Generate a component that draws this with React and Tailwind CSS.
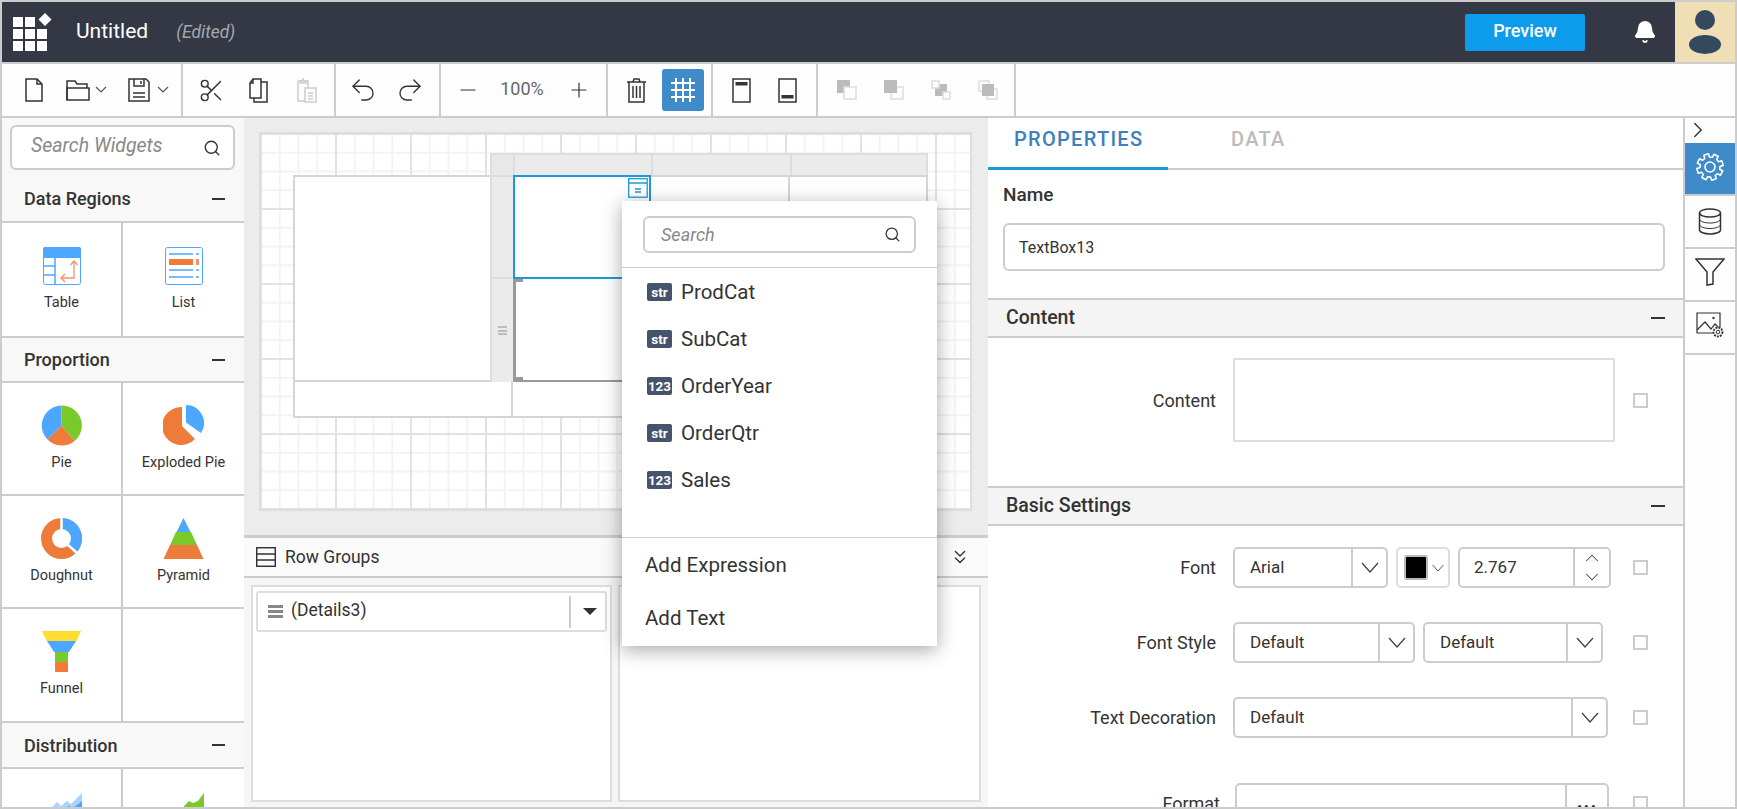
import React from 'react'
import { Search, Scissors, Undo2, Redo2, Minus, Plus, Bell, ChevronRight, ChevronUp, ChevronsDown } from 'lucide-react'

const S = { fill: 'none', stroke: '#333', strokeWidth: 1.5 }

function Logo() {
  const cells = [[0, 4], [12, 4], [0, 16], [12, 16], [24, 16], [0, 28], [12, 28], [24, 28]]
  return (
    <svg width="40" height="38" viewBox="0 0 40 38" className="ml-[11px]">
      {cells.map(([x, y]) => <rect key={`${x}-${y}`} x={x} y={y} width="10" height="10" fill="#fff" />)}
      <polygon points="32,0 38.500,6.500 32,13 25.500,6.500" fill="#fff" />
    </svg>
  )
}

function FileIcon() {
  return <svg width="18" height="24" viewBox="0 0 18 24" {...S}><path d="M1 1h11l5 5v17H1z" /><path d="M12 1v5h5" /></svg>
}
function FolderIcon() {
  return <svg width="24" height="22" viewBox="0 0 24 22" {...S}><path d="M1 21V2h8l2 3h10v4" /><path d="M1 9h22v12H1z" /></svg>
}
function SaveIcon() {
  return <svg width="22" height="24" viewBox="0 0 22 24" {...S}><path d="M1 1h17l3 3v19H1z" /><path d="M6 1v7h10V1M13 3v3M5 15h12M5 19h12" /></svg>
}
function Chev() {
  return <svg width="12" height="8" viewBox="0 0 12 8" fill="none" stroke="#555" strokeWidth="1.200"><path d="M1 1l5 5 5-5" /></svg>
}
function CopyIcon() {
  return <svg width="19" height="25" viewBox="0 0 19 25" {...S}><path d="M1 5l3-4h8v19H1z" /><path d="M1 5h3V1M12 4h6v20H5v-4" /></svg>
}
function PasteIcon() {
  return <svg width="24" height="25" viewBox="0 0 24 25" fill="none" stroke="#ccc" strokeWidth="1.500"><path d="M5 3h10v7M5 3v20h7" /><path d="M7 5V3h2l1-2 1 2h2v2z" /><path d="M12 10h11v14H12zM15 15h5M15 18h5M15 21h5" /></svg>
}
function TrashIcon() {
  return <svg width="19" height="25" viewBox="0 0 19 25" {...S}><path d="M0 4h19M6 4l1-3h5l1 3" /><path d="M2 4v20h15V4" /><path d="M6 8v12M9.500 8v12M13 8v12" /></svg>
}
function GridIcon() {
  return <svg width="24" height="24" viewBox="0 0 24 24" stroke="#fff" strokeWidth="2"><path d="M0 5h24M0 12h24M0 19h24M5 0v24M12 0v24M19 0v24" /></svg>
}
function HeaderIcon({ bottom }) {
  return (
    <svg width="19" height="25" viewBox="0 0 19 25" {...S}>
      <rect x="1" y="1" width="17" height="23" />
      <rect x="3.500" y={bottom ? 17 : 4} width="12" height="3.500" fill="#333" stroke="none" />
    </svg>
  )
}
function LayerIcon({ kind }) {
  const f = '#bbb'
  const e = '#ddd'
  if (kind === 0) return <svg width="20" height="20" viewBox="0 0 20 20"><rect x="0" y="0" width="13" height="13" fill={f} /><rect x="7" y="7" width="12" height="12" fill="#fdfdfd" stroke={e} strokeWidth="1.500" /></svg>
  if (kind === 1) return <svg width="20" height="20" viewBox="0 0 20 20"><rect x="7" y="7" width="12" height="12" fill="#fdfdfd" stroke={e} strokeWidth="1.500" /><rect x="0" y="0" width="13" height="13" fill={f} /></svg>
  if (kind === 2) return <svg width="20" height="20" viewBox="0 0 20 20"><rect x="4" y="4" width="12" height="12" fill={f} /><rect x="1" y="1" width="7" height="7" fill="#fdfdfd" stroke={e} strokeWidth="1.500" /><rect x="12" y="12" width="7" height="7" fill="#fdfdfd" stroke={e} strokeWidth="1.500" /></svg>
  return <svg width="20" height="20" viewBox="0 0 20 20"><rect x="1" y="1" width="10" height="10" fill="none" stroke={e} strokeWidth="1.500" /><rect x="9" y="9" width="10" height="10" fill="none" stroke={e} strokeWidth="1.500" /><rect x="4" y="4" width="12" height="12" fill={f} /></svg>
}

function Toolbar() {
  const sep = 'h-full border-r-2 border-[#ccc] flex items-center'
  return (
    <div className="h-[56px] shrink-0 flex border-y-2 border-[#ccc] bg-[#fdfdfd]">
      <div className={`${sep} w-[181px]`}>
        <span className="ml-[23px]"><FileIcon /></span>
        <span className="ml-[23px]"><FolderIcon /></span>
        <span className="ml-[5px]"><Chev /></span>
        <span className="ml-[21px]"><SaveIcon /></span>
        <span className="ml-[7px]"><Chev /></span>
      </div>
      <div className={`${sep} w-[153px]`}>
        <Scissors size={27} strokeWidth={1.300} color="#333" className="ml-[15px]" />
        <span className="ml-[24px]"><CopyIcon /></span>
        <span className="ml-[25px]"><PasteIcon /></span>
      </div>
      <div className={`${sep} w-[105px]`}>
        <Undo2 size={30} strokeWidth={1.100} color="#333" className="ml-[12px]" />
        <Redo2 size={30} strokeWidth={1.100} color="#333" className="ml-[17px]" />
      </div>
      <div className={`${sep} w-[167px] text-[18px] text-[#666]`}>
        <Minus size={24} strokeWidth={1.200} color="#333" className="ml-[15px]" />
        <span className="ml-[17px] -mt-[4px] w-[50px] text-center">100%</span>
        <Plus size={24} strokeWidth={1.200} color="#333" className="ml-[20px]" />
      </div>
      <div className={`${sep} w-[105px]`}>
        <span className="ml-[19px]"><TrashIcon /></span>
        <span className="ml-[16px] w-[42px] h-[42px] rounded-[3px] bg-[#3f8ac9] flex items-center justify-center"><GridIcon /></span>
      </div>
      <div className={`${sep} w-[105px]`}>
        <span className="ml-[19px]"><HeaderIcon /></span>
        <span className="ml-[27px]"><HeaderIcon bottom /></span>
      </div>
      <div className={`${sep} w-[198px]`}>
        <span className="ml-[19px]"><LayerIcon kind={0} /></span>
        <span className="ml-[27px]"><LayerIcon kind={1} /></span>
        <span className="ml-[27px]"><LayerIcon kind={2} /></span>
        <span className="ml-[27px]"><LayerIcon kind={3} /></span>
      </div>
    </div>
  )
}

const BLUE = '#4da6ff'
const ORANGE = '#ee7b39'
const GREEN = '#7ac92a'

function TableWidget() {
  return (
    <svg width="38" height="38" viewBox="0 0 38 38" fill="none">
      <rect x="0.500" y="0.500" width="37" height="37" rx="2" fill="#fff" stroke={BLUE} />
      <rect x="0" y="0" width="38" height="11" rx="2" fill={BLUE} />
      <path d="M12 11v27M1 19h11M1 28h11" stroke={BLUE} strokeWidth="1.500" />
      <path d="M31 14v17H18M27.500 18l3.500-4 3.500 4M22 27l-4 4 4 4" stroke="#f4936a" strokeWidth="1.300" />
    </svg>
  )
}
function ListWidget() {
  return (
    <svg width="38" height="38" viewBox="0 0 38 38" fill="none">
      <rect x="0.500" y="0.500" width="37" height="37" rx="2" fill="#fff" stroke={BLUE} />
      <path d="M4 7h24M4 23h24M4 30h24M31 7h3M31 23h3M31 30h3" stroke={BLUE} strokeWidth="1.500" />
      <rect x="4" y="12" width="24" height="6" fill={ORANGE} />
      <rect x="31" y="12" width="3" height="6" fill="#f4936a" />
    </svg>
  )
}
function PieWidget() {
  return (
    <svg width="41" height="41" viewBox="0 0 41 41">
      <path d="M20.500 20.500V0.500A20 20 0 0 1 33.500 36z" fill={GREEN} />
      <path d="M20.500 20.500L33.500 36A20 20 0 0 1 6.500 34.500z" fill={ORANGE} />
      <path d="M20.500 20.500L6.500 34.500A20 20 0 0 1 20.500 0.500z" fill={BLUE} />
    </svg>
  )
}
function ExplodedWidget() {
  return (
    <svg width="41" height="41" viewBox="0 0 41 41">
      <path d="M19 21L32 34A19 19 0 1 1 19 2z" fill={ORANGE} />
      <path d="M23 17.500V0A18 18 0 0 1 38 28z" fill={BLUE} />
    </svg>
  )
}
function DoughnutWidget() {
  return (
    <svg width="41" height="41" viewBox="0 0 41 41">
      <circle cx="20.500" cy="20.500" r="20.500" fill={ORANGE} />
      <path d="M20.500 20.500V0A20.500 20.500 0 0 1 35.500 34.500z" fill={BLUE} />
      <circle cx="20.500" cy="20.500" r="9.500" fill="#fff" />
      <path d="M20.500 0v13M27 27l9 8" stroke="#fff" strokeWidth="2.500" />
    </svg>
  )
}
function PyramidWidget() {
  return (
    <svg width="41" height="41" viewBox="0 0 41 41">
      <polygon points="20.500,0 27.500,14 13.500,14" fill={BLUE} />
      <polygon points="13,14 28,14 34,27 7,27" fill={GREEN} />
      <polygon points="7,27 34,27 40.500,41 0.500,41" fill={ORANGE} />
    </svg>
  )
}
function FunnelWidget() {
  return (
    <svg width="41" height="41" viewBox="0 0 41 41">
      <polygon points="1,0 40,0 35.500,10 5.500,10" fill="#ffdd33" />
      <polygon points="6,10 35,10 28,21 13,21" fill={BLUE} />
      <rect x="14" y="21" width="13" height="10" fill={GREEN} />
      <rect x="14" y="31" width="13" height="10" rx="1" fill={ORANGE} />
    </svg>
  )
}
function AreaWidget() {
  return (
    <svg width="41" height="41" viewBox="0 0 41 41">
      <path d="M10 17L16 11l4 4 6-5 4 3 11-11v39H10z" fill="#a9d3ff" />
      <path d="M20 19l8-4 4 2 9-7v31H20z" fill={BLUE} />
    </svg>
  )
}
function GreenWidget() {
  return (
    <svg width="41" height="41" viewBox="0 0 41 41">
      <path d="M21 15L26 10l4 2 5-2 6-8v39H21z" fill={GREEN} />
    </svg>
  )
}

function Cell({ icon, label, right }) {
  return (
    <div className={`flex flex-col items-center pt-[22px] ${right ? '' : 'border-r-2 border-[#ccc]'}`}>
      <div className="h-[41px] w-[41px] flex items-center justify-center">{icon}</div>
      {label && <div className="mt-[7px] text-[14.500px] leading-[20px] text-[#333]">{label}</div>}
    </div>
  )
}

function WidgetHeader({ title, className }) {
  return (
    <div className={`flex items-center justify-between pl-[22px] pr-[19px] border-b-2 border-[#ccc] ${className}`}>
      <span className="text-[18px] font-medium text-[#333]">{title}</span>
      <span className="w-[13px] h-[2px] bg-[#333]" />
    </div>
  )
}

function WidgetPanel() {
  const row = 'grid grid-cols-[121px_1fr] bg-white border-b-2 border-[#ccc]'
  return (
    <div className="w-[242px] h-full shrink-0 bg-[#f8f8f8] overflow-hidden">
      <div className="ml-[8px] mt-[7px] w-[225px] h-[45px] rounded-[6px] border-2 border-[#ccc] bg-white flex items-center justify-between pl-[19px] pr-[12px]">
        <span className="italic text-[19.500px] -mt-[4px] text-[#888]">Search Widgets</span>
        <Search size={18} strokeWidth={1.800} color="#333" />
      </div>
      <WidgetHeader title="Data Regions" className="h-[53px] pt-[6px]" />
      <div className={`${row} h-[115px]`}>
        <Cell icon={<TableWidget />} label="Table" />
        <Cell right icon={<ListWidget />} label="List" />
      </div>
      <WidgetHeader title="Proportion" className="h-[45px]" />
      <div className={`${row} h-[113px]`}>
        <Cell icon={<PieWidget />} label="Pie" />
        <Cell right icon={<ExplodedWidget />} label="Exploded Pie" />
      </div>
      <div className={`${row} h-[113px]`}>
        <Cell icon={<DoughnutWidget />} label="Doughnut" />
        <Cell right icon={<PyramidWidget />} label="Pyramid" />
      </div>
      <div className={`${row} h-[114px]`}>
        <Cell icon={<FunnelWidget />} label="Funnel" />
        <Cell right />
      </div>
      <WidgetHeader title="Distribution" className="h-[46px]" />
      <div className="grid grid-cols-[121px_1fr] bg-white h-[60px]">
        <Cell icon={<AreaWidget />} />
        <Cell right icon={<GreenWidget />} />
      </div>
    </div>
  )
}

function ReportTable() {
  const hdr = 'bg-[#ebebeb] border-l-2 border-[#ddd]'
  const cell = 'bg-white border-r-2 border-b-2 border-[#d5d5d5]'
  return (
    <div className="ml-[32px] mt-[19px] grid grid-cols-[197px_23px_138px_139px_138px] grid-rows-[22px_104px_103px_36px]">
      <div />
      <div className="bg-[#e8e8e8] border-t-2 border-l-2 border-[#ddd]" />
      <div className={`${hdr} border-t-2`} />
      <div className={`${hdr} border-t-2`} />
      <div className={`${hdr} border-t-2 border-r-2`} />

      <div className="row-span-2 bg-white border-y-2 border-l-2 border-[#d5d5d5]" />
      <div className="bg-[#ebebeb] border-y-2 border-l-2 border-[#ddd]" />
      <div className="relative bg-white border-2 border-[#1a9ad8]">
        <svg width="20" height="20" viewBox="0 0 20 20" fill="none" stroke="#1a9ad8" strokeWidth="1.300" className="absolute right-[1px] top-[1px]">
          <rect x="0.700" y="0.700" width="18.500" height="18.500" />
          <path d="M1 5h18M7 11h6M7 14h6" />
        </svg>
      </div>
      <div className={`${cell} border-t-2`} />
      <div className={`${cell} border-t-2`} />

      <div className="bg-[#ebebeb] border-l-2 border-[#ddd] flex items-center justify-center">
        <span className="flex flex-col gap-[1.500px]">
          <i className="block w-[9px] h-[2px] bg-[#bbb]" />
          <i className="block w-[9px] h-[2px] bg-[#bbb]" />
          <i className="block w-[9px] h-[2px] bg-[#bbb]" />
        </span>
      </div>
      <div className="relative bg-white border-l-[3px] border-b-2 border-[#999]">
        <i className="absolute left-0 top-0 w-[7px] h-[3px] bg-[#999]" />
        <i className="absolute left-0 bottom-0 w-[7px] h-[3px] bg-[#999]" />
      </div>
      <div className={cell} />
      <div className={cell} />

      <div className="col-span-2 bg-white border-x-2 border-b-2 border-[#d5d5d5]" />
      <div className={cell} />
      <div className={cell} />
      <div className={cell} />
    </div>
  )
}

function CenterPane() {
  return (
    <div className="w-[744px] h-full shrink-0 flex flex-col">
      <div className="h-[420px] shrink-0 bg-[#ececec] border-b-[3px] border-[#ccc] pl-[15px] pt-[14px]">
        <div className="w-[713px] h-[379px] border-2 border-[#ddd] bg-white bg-[linear-gradient(#e2e2e2_2px,transparent_2px),linear-gradient(90deg,#e2e2e2_2px,transparent_2px),linear-gradient(#f3f3f3_1.500px,transparent_1.500px),linear-gradient(90deg,#f3f3f3_1.500px,transparent_1.500px)] bg-[size:75px_75px,75px_75px,18.750px_18.750px,18.750px_18.750px] bg-[position:-1px_-1px] overflow-hidden">
          <ReportTable />
        </div>
      </div>
      <div className="h-[40px] shrink-0 bg-[#fafafa] border-b-2 border-[#ccc] flex items-center pl-[12px] text-[17.500px] text-[#333]">
        <svg width="20" height="20" viewBox="0 0 20 20" {...S}>
          <rect x="0.700" y="0.700" width="18.600" height="18.600" />
          <path d="M1 7h18M1 13h18" />
        </svg>
        <span className="ml-[9px]">Row Groups</span>
        <ChevronsDown size={22} strokeWidth={1.500} color="#333" className="ml-[570px]" />
      </div>
      <div className="flex-1 bg-[#f5f5f5] flex gap-[6px] pl-[7px] pt-[7px]">
        <div className="w-[361px] h-[217px] bg-white border-2 border-[#ddd] px-[3px] pt-[4px]">
          <div className="h-[41px] rounded-[3px] border-2 border-[#ddd] flex items-center pl-[10px] text-[17.500px] text-[#333]">
            <span className="flex flex-col gap-[2px]">
              <i className="block w-[15px] h-[3px] bg-[#888]" />
              <i className="block w-[15px] h-[3px] bg-[#888]" />
              <i className="block w-[15px] h-[3px] bg-[#888]" />
            </span>
            <span className="ml-[8px] -mt-[3px] w-[270px]">(Details3)</span>
            <span className="h-[32px] border-l-2 border-[#ccc] flex items-center pl-[12px] ml-[8px]">
              <i className="w-0 h-0 border-x-[7px] border-x-transparent border-t-[7px] border-t-[#333]" />
            </span>
          </div>
        </div>
        <div className="w-[363px] h-[217px] bg-white border-2 border-[#ddd]" />
      </div>
    </div>
  )
}

function Check() {
  return <span className="block ml-[18px] w-[15px] h-[15px] border-2 border-[#ccc] shrink-0" />
}

function VChev({ w = 18, h = 11 }) {
  return <svg width={w} height={h} viewBox="0 0 18 11" fill="none" stroke="#444" strokeWidth="1.300"><path d="M1 1l8 9 8-9" /></svg>
}

function Select({ text, width, arrow = 35 }) {
  return (
    <div className="h-[41px] rounded-[5px] border-2 border-[#ccc] bg-white flex shrink-0 text-[17px] text-[#333]" style={{ width }}>
      <span className="flex-1 pl-[15px] self-center">{text}</span>
      <span className="border-l-2 border-[#ccc] flex items-center justify-center shrink-0" style={{ width: arrow }}>
        <VChev />
      </span>
    </div>
  )
}

function Row({ label, children, className, labelClass }) {
  return (
    <div className={`flex items-center ${className}`}>
      <span className={`w-[228px] shrink-0 text-right text-[18px] text-[#333] ${labelClass || ''}`}>{label}</span>
      <div className="ml-[17px] w-[382px] flex gap-[8px] shrink-0">{children}</div>
      <Check />
    </div>
  )
}

function SectionHead({ title, className }) {
  return (
    <div className={`h-[40px] bg-[#f4f4f4] border-y-2 border-[#ccc] flex items-center justify-between pl-[18px] pr-[18px] ${className}`}>
      <span className="text-[19.500px] -mt-[1px] font-medium text-[#333]">{title}</span>
      <span className="w-[14px] h-[2px] bg-[#333]" />
    </div>
  )
}

function PropertiesPanel() {
  return (
    <div className="w-[697px] h-full shrink-0 bg-white border-r-2 border-[#ccc] overflow-hidden">
      <div className="h-[52px] border-b-2 border-[#ccc] flex items-start">
        <div className="w-[180px] h-[52px] border-b-[3px] border-[#1a9ad8] pl-[26px] pt-[6px] text-[20px] tracking-[1.300px] font-medium text-[#3d7fbf]">PROPERTIES</div>
        <div className="ml-[63px] pt-[6px] text-[20px] tracking-[1.300px] font-medium text-[#bbb]">DATA</div>
      </div>
      <div className="pl-[15px] pt-[14px] text-[19px] leading-[22px] font-medium text-[#333]">Name</div>
      <div className="ml-[15px] mt-[17px] w-[662px] h-[48px] rounded-[6px] border-2 border-[#ccc] flex items-center pl-[14px] text-[16px] text-[#333]"><span className="mt-[1px]">TextBox13</span></div>
      <SectionHead title="Content" className="mt-[27px]" />
      <div className="flex items-center mt-[20px]">
        <span className="w-[228px] shrink-0 text-right text-[18px] text-[#333]">Content</span>
        <div className="ml-[17px] w-[382px] h-[84px] rounded-[2px] border-2 border-[#ddd] shrink-0" />
        <Check />
      </div>
      <SectionHead title="Basic Settings" className="mt-[44px]" />
      <Row label="Font" className="mt-[21px]">
        <Select text="Arial" width={155} />
        <div className="w-[54px] h-[41px] rounded-[5px] border-2 border-[#ddd] flex items-center pl-[6px] shrink-0">
          <span className="w-[24px] h-[25px] rounded-[3px] bg-black border-2 border-[#bbb]" />
          <span className="ml-[4px]"><VChev w={12} h={8} /></span>
        </div>
        <div className="w-[153px] h-[41px] rounded-[5px] border-2 border-[#ccc] flex text-[17px] text-[#333] shrink-0">
          <span className="flex-1 pl-[14px] self-center">2.767</span>
          <span className="w-[36px] border-l-2 border-[#ccc] flex flex-col items-center justify-center gap-[3px]">
            <ChevronUp size={22} strokeWidth={1.100} color="#444" className="-my-[3px]" />
            <ChevronUp size={22} strokeWidth={1.100} color="#444" className="-my-[3px] rotate-180" />
          </span>
        </div>
      </Row>
      <Row label="Font Style" className="mt-[34px]">
        <Select text="Default" width={182} />
        <Select text="Default" width={180} />
      </Row>
      <Row label="Text Decoration" className="mt-[34px]">
        <Select text="Default" width={375} />
      </Row>
      <Row label="Format" labelClass="translate-x-[4px]" className="mt-[45px]">
        <div className="ml-[2px] w-[374px] h-[41px] rounded-[5px] border-2 border-[#ccc] flex shrink-0">
          <span className="flex-1" />
          <span className="w-[42px] border-l-2 border-[#ccc] flex items-center justify-center font-bold text-[#333] text-[20px] leading-[20px] tracking-[1px]"><span className="-mt-[5px]">...</span></span>
        </div>
      </Row>
    </div>
  )
}

// eight-tooth gear outline, computed once
function gearPath(cx, cy, outer, inner) {
  const pts = []
  for (let i = 0; i < 8; i++) {
    const a = (i * Math.PI) / 4 - Math.PI / 8
    const steps = [[inner, -0.16], [outer, -0.09], [outer, 0.27], [inner, 0.34]]
    steps.forEach(([r, d]) => pts.push(`${(cx + r * Math.cos(a + d)).toFixed(2)},${(cy + r * Math.sin(a + d)).toFixed(2)}`))
  }
  return `M${pts.join('L')}Z`
}

function GearIcon() {
  return (
    <svg width="28" height="28" viewBox="0 0 28 28" fill="none" stroke="#fff" strokeWidth="1.600" strokeLinejoin="round">
      <path d={gearPath(14, 14, 13.300, 10)} />
      <circle cx="14" cy="14" r="5" />
    </svg>
  )
}

function DbIcon() {
  return (
    <svg width="24" height="27" viewBox="0 0 24 27" {...S}>
      <ellipse cx="12" cy="5" rx="10.500" ry="4" />
      <path d="M1.500 5v17c0 2.200 4.700 4 10.500 4s10.500-1.800 10.500-4V5" />
      <path d="M1.500 11c0 2.200 4.700 4 10.500 4s10.500-1.800 10.500-4M1.500 16.500c0 2.200 4.700 4 10.500 4s10.500-1.800 10.500-4" strokeWidth="1" />
    </svg>
  )
}

function ImageGear() {
  return (
    <svg width="28" height="26" viewBox="0 0 28 26" {...S} strokeWidth="1.200">
      <path d="M17 21H1V1h23v14" />
      <path d="M1 18l8-8 6 7 4-5 3 3" />
      <circle cx="17.500" cy="6" r="1.200" fill="#333" stroke="none" />
      <circle cx="22" cy="20" r="4.500" strokeDasharray="2 1" strokeWidth="1.800" />
      <circle cx="22" cy="20" r="1.800" strokeWidth="1" />
    </svg>
  )
}

function SideStrip() {
  const row = 'h-[53px] border-b-2 border-[#ccc] flex items-center justify-center'
  return (
    <div className="w-[50px] h-full shrink-0 bg-[#fdfdfd]">
      <div className="h-[25px] flex items-center -mt-[1px] mb-[1px]">
        <ChevronRight size={26} strokeWidth={1.300} color="#333" />
      </div>
      <div className={`${row} bg-[#3f8ac9] pb-[3px]`}><GearIcon /></div>
      <div className={`${row} h-[52px]`}><DbIcon /></div>
      <div className={`${row} pb-[5px]`}>
        <svg width="30" height="28" viewBox="0 0 30 28" {...S}>
          <path d="M1 1h28L18 14v12l-6 1V14z" />
        </svg>
      </div>
      <div className={`${row} pb-[5px]`}><ImageGear /></div>
    </div>
  )
}

function FieldPopup() {
  const fields = [
    ['str', 'ProdCat'],
    ['str', 'SubCat'],
    ['123', 'OrderYear'],
    ['str', 'OrderQtr'],
    ['123', 'Sales'],
  ]
  return (
    <div className="absolute left-[620px] top-[199px] w-[315px] h-[445px] bg-white shadow-[0_4px_18px_rgba(0,0,0,0.35)]">
      <div className="h-[67px] border-b border-[#ccc] pt-[15px] pl-[21px]">
        <div className="w-[273px] h-[37px] rounded-[6px] border-2 border-[#ccc] flex items-center justify-between pl-[16px] pr-[13px]">
          <span className="italic text-[18px] text-[#888]">Search</span>
          <Search size={17} strokeWidth={1.800} color="#333" />
        </div>
      </div>
      {fields.map(([type, name]) => (
        <div key={name} className="h-[47px] flex items-center pl-[25px]">
          <span className="w-[25px] h-[18px] rounded-[2px] bg-[#46536d] text-white text-[13.500px] font-bold leading-[18px] text-center">{type}</span>
          <span className="ml-[9px] mt-[1px] text-[20.500px] text-[#333]">{name}</span>
        </div>
      ))}
      <div className="mt-[34px] border-t border-[#ccc]">
        <div className="h-[54px] flex items-center pl-[23px] text-[20.500px] text-[#333]">Add Expression</div>
        <div className="h-[53px] flex items-center pl-[23px] text-[20.500px] text-[#333]">Add Text</div>
      </div>
    </div>
  )
}

export default function App() {
  return (
    <div className="relative w-[1737px] h-[809px] overflow-hidden border-2 border-[#ccc] bg-white flex flex-col font-[Roboto,sans-serif]">
      <div className="h-[60px] shrink-0 bg-[#343844] flex items-center text-white">
        <Logo />
        <span className="ml-[23px] text-[21px]">Untitled</span>
        <span className="ml-[28px] italic text-[17.500px] text-[#a5a8ae]">(Edited)</span>
        <button className="ml-auto w-[120px] h-[37px] rounded-[2px] bg-[#0d9bec] text-[18px] font-medium pb-[3px]">Preview</button>
        <Bell size={24} fill="#fff" color="#fff" className="ml-[48px]" />
        <div className="ml-[18px] w-[60px] h-[60px] bg-[#f0dfb5] flex flex-col items-center pt-[8px]">
          <span className="w-[20px] h-[20px] rounded-full bg-[#34495e]" />
          <span className="mt-[5px] w-[32px] h-[19px] rounded-[50%] bg-[#34495e]" />
        </div>
      </div>
      <Toolbar />
      <div className="flex-1 min-h-0 flex">
        <WidgetPanel />
        <CenterPane />
        <PropertiesPanel />
        <SideStrip />
      </div>
      <FieldPopup />
    </div>
  )
}
